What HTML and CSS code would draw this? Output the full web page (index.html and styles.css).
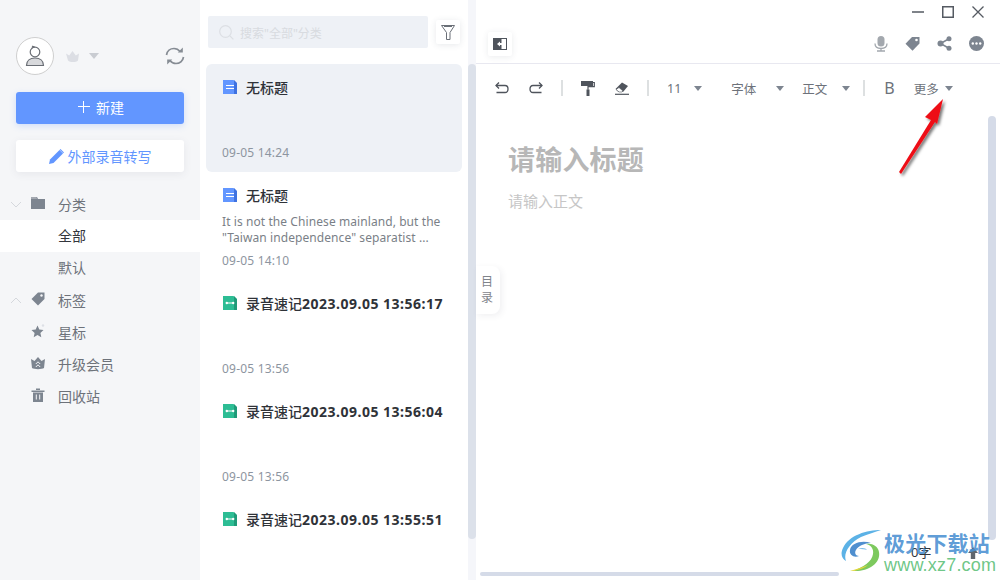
FILE: index.html
```html
<!DOCTYPE html>
<html lang="zh-CN">
<head>
  <meta charset="UTF-8">
  <title>录音笔记</title>
  <link rel="stylesheet" href="styles.css">
</head>
<body>
<div class="app">

  <!-- left sidebar -->
  <aside class="sidebar">
    <div class="user-row">
      <div class="avatar">
        <svg width="24" height="24" viewBox="0 0 24 24"><path d="M3.500 21.500c0-5 3.600-7.500 8.500-7.500s8.500 2.500 8.500 7.500z" fill="#d8d9dc" stroke="#6a6e75" stroke-width="1.200"/><circle cx="12" cy="8" r="4.800" fill="#fff" stroke="#6a6e75" stroke-width="1.200"/><path d="M9.200 4.200l.3-2.200 2.500 1.200" fill="none" stroke="#6a6e75"/></svg>
      </div>
      <svg class="crown" width="13" height="11" viewBox="0 0 13 11"><path d="M0 2.500l3.200 2L6.500 0l3.300 4.500 3.200-2-1 7c-2 2-8 2-10 0z" fill="#dcdee4"/></svg>
      <span class="caret caret-light"></span>
      <svg class="sync" width="20" height="20" viewBox="0 0 20 20" fill="none" stroke="#868c94" stroke-width="1.700"><path d="M1.500 9c.6-4 3.800-6.500 7.500-6.500 2.500 0 4.500 1 6 3"/><path d="M18.500 11c-.6 4-3.800 6.500-7.500 6.500-2.500 0-4.500-1-6-3"/><path d="M17.800 1.500v5h-5z" fill="#868c94" stroke="none"/><path d="M2.200 18.500v-5h5z" fill="#868c94" stroke="none"/></svg>
    </div>
    <button class="btn-new"><span class="plus"></span>新建</button>
    <button class="btn-transcribe">
      <svg width="15" height="15" viewBox="0 0 15 15"><path d="M0 15l1-4.500L10.500 1l3.500 3.500L4.500 14z" fill="#6296ff"/><path d="M11.500 0l3.500 3.500-.8.800-3.500-3.500z" fill="#6296ff"/></svg>
      外部录音转写
    </button>
    <ul class="nav">
      <li class="nav-row">
        <svg class="chev" width="12" height="7" viewBox="0 0 12 7"><path d="M1 1l5 5 5-5" fill="none" stroke="#d5d8dd"/></svg>
        <svg class="nav-icon" width="14" height="14" viewBox="0 0 14 14"><path d="M0 1h6l1 2h7v10H0z" fill="#7d8590"/><path d="M0 1h5.500L6 3H0z" fill="#a3a8b0"/></svg>
        分类
      </li>
      <li class="nav-row nav-sub is-active">全部</li>
      <li class="nav-row nav-sub">默认</li>
      <li class="nav-row">
        <svg class="chev" width="12" height="7" viewBox="0 0 12 7"><path d="M1 6l5-5 5 5" fill="none" stroke="#d5d8dd"/></svg>
        <svg class="nav-icon" width="14" height="14" viewBox="0 0 14 14"><path d="M7 0.500h6.500V7L7 13.500 0.500 7z" fill="#7d8590"/><circle cx="10.500" cy="3.500" r="1.200" fill="#f5f6f8"/></svg>
        标签
      </li>
      <li class="nav-row">
        <svg class="nav-icon" width="14" height="14" viewBox="0 0 14 14"><path d="M6.500 1.500l1.800 4 4.200.5-3.100 2.900.9 4.300-3.800-2.200-3.800 2.200.9-4.300L.5 6l4.200-.5z" fill="#7d8590"/><circle cx="12" cy="1.500" r="1.200" fill="#dde0e6"/></svg>
        星标
      </li>
      <li class="nav-row">
        <svg class="nav-icon" width="14" height="14" viewBox="0 0 14 14"><path d="M0 3l3.500 2L7 1l3.500 4L14 3l-1 9c-2 1.500-10 1.500-12 0z" fill="#7d8590"/><path d="M4.800 8L7 5.800 9.200 8M4.800 11L7 8.800 9.200 11" fill="none" stroke="#f5f6f8"/></svg>
        升级会员
      </li>
      <li class="nav-row">
        <svg class="nav-icon" width="14" height="14" viewBox="0 0 14 14"><path d="M0.500 2.500h13v1.500h-13zM5 0.500h4v1.500H5z" fill="#7d8590"/><path d="M2 4.500h10V14H2z" fill="#7d8590"/><path d="M5.300 6.500v5M8.700 6.500v5" stroke="#f5f6f8"/></svg>
        回收站
      </li>
    </ul>
  </aside>

  <!-- note list -->
  <section class="list">
    <div class="search-row">
      <div class="search">
        <svg width="15" height="15" viewBox="0 0 15 15" fill="none" stroke="#dcdfe4" stroke-width="1.200"><circle cx="6.500" cy="6.500" r="5.800"/><path d="M11 11l3.400 3.400"/></svg>
        <span>搜索"全部"分类</span>
      </div>
      <button class="filter">
        <svg width="14" height="15" viewBox="0 0 14 15" fill="none" stroke="#6a6f77"><path d="M0.500 0.500h13L9 7.500v7H5.500v-7z"/><path d="M3 1.500h8"/></svg>
      </button>
    </div>

    <article class="note is-selected">
      <h3><svg class="doc" width="14" height="14" viewBox="0 0 14 14"><path d="M0 0h10.500L14 3.500V14H0z" fill="#6296ff"/><path d="M11 0l3 3v11h-3z" fill="#3f72e0"/><path d="M3 5.500h8M3 8.500h8" stroke="#fff" stroke-width="1.200"/></svg>无标题</h3>
      <p class="excerpt"></p>
      <time>09-05 14:24</time>
    </article>
    <article class="note">
      <h3><svg class="doc" width="14" height="14" viewBox="0 0 14 14"><path d="M0 0h10.500L14 3.500V14H0z" fill="#6296ff"/><path d="M11 0l3 3v11h-3z" fill="#3f72e0"/><path d="M3 5.500h8M3 8.500h8" stroke="#fff" stroke-width="1.200"/></svg>无标题</h3>
      <p class="excerpt">It is not the Chinese mainland, but the "Taiwan independence" separatist ...</p>
      <time>09-05 14:10</time>
    </article>
    <article class="note">
      <h3><svg class="doc" width="14" height="14" viewBox="0 0 14 14"><path d="M0 0h10.500L14 3.500V14H0z" fill="#2dbd94"/><path d="M11 0l3 3v11h-3z" fill="#1f9a78"/><path d="M3.500 7h7" stroke="#fff"/><circle cx="3.800" cy="7" r="1.200" fill="#fff"/><circle cx="10.200" cy="7" r="1.200" fill="#fff"/></svg><span>录音速记<b>2023.09.05 13:56:17</b></span></h3>
      <p class="excerpt"></p>
      <time>09-05 13:56</time>
    </article>
    <article class="note">
      <h3><svg class="doc" width="14" height="14" viewBox="0 0 14 14"><path d="M0 0h10.500L14 3.500V14H0z" fill="#2dbd94"/><path d="M11 0l3 3v11h-3z" fill="#1f9a78"/><path d="M3.500 7h7" stroke="#fff"/><circle cx="3.800" cy="7" r="1.200" fill="#fff"/><circle cx="10.200" cy="7" r="1.200" fill="#fff"/></svg><span>录音速记<b>2023.09.05 13:56:04</b></span></h3>
      <p class="excerpt"></p>
      <time>09-05 13:56</time>
    </article>
    <article class="note">
      <h3><svg class="doc" width="14" height="14" viewBox="0 0 14 14"><path d="M0 0h10.500L14 3.500V14H0z" fill="#2dbd94"/><path d="M11 0l3 3v11h-3z" fill="#1f9a78"/><path d="M3.500 7h7" stroke="#fff"/><circle cx="3.800" cy="7" r="1.200" fill="#fff"/><circle cx="10.200" cy="7" r="1.200" fill="#fff"/></svg><span>录音速记<b>2023.09.05 13:55:51</b></span></h3>
    </article>
  </section>

  <div class="list-scroll"><div class="list-thumb"></div></div>

  <!-- editor -->
  <main class="editor">
    <div class="win-bar">
      <svg width="12" height="12" viewBox="0 0 12 12"><path d="M0 6h12" stroke="#555a62" stroke-width="1.500"/></svg>
      <svg width="12" height="12" viewBox="0 0 12 12"><rect x="0.750" y="0.750" width="10.500" height="10.500" fill="none" stroke="#555a62" stroke-width="1.500"/></svg>
      <svg width="12" height="12" viewBox="0 0 12 12"><path d="M0.500 0.500l11 11M11.500 0.500l-11 11" stroke="#555a62" stroke-width="1.300"/></svg>
    </div>
    <div class="top-row">
      <button class="panel-toggle">
        <svg width="14" height="12" viewBox="0 0 14 12"><path d="M0 0h14v12H0z" fill="#4f545c"/><path d="M8.500 1h4.500v10H8.500z" fill="#fff"/><path d="M4 6l3-2.500v5z" fill="#fff"/><path d="M6 5h3v2H6z" fill="#fff"/></svg>
      </button>
      <div class="top-actions">
        <svg width="14" height="16" viewBox="0 0 14 16"><rect x="3.500" y="0" width="7" height="10.500" rx="3.500" fill="#a3a8ae"/><path d="M1 7.500c0 3.500 2.500 5 6 5s6-1.500 6-5M3 15h8M7 12.500V15" fill="none" stroke="#a3a8ae" stroke-width="1.300"/></svg>
        <svg width="15" height="15" viewBox="0 0 15 15"><path d="M7 1h7.500v6.500L7.500 14.800.5 7.800z" fill="#7d8590"/><circle cx="11.500" cy="4" r="1.300" fill="#fff"/></svg>
        <svg width="15" height="15" viewBox="0 0 15 15"><path d="M11.500 3L3.500 7.500l8 4.500" fill="none" stroke="#7d8590" stroke-width="1.500"/><circle cx="3.500" cy="7.500" r="3" fill="#7d8590"/><circle cx="12" cy="2.800" r="2.500" fill="#7d8590"/><circle cx="12" cy="12.200" r="2.500" fill="#7d8590"/></svg>
        <svg width="15" height="15" viewBox="0 0 15 15"><circle cx="7.500" cy="7.500" r="7.500" fill="#7d8590"/><circle cx="3.800" cy="7.500" r="1.200" fill="#fff"/><circle cx="7.500" cy="7.500" r="1.200" fill="#fff"/><circle cx="11.200" cy="7.500" r="1.200" fill="#fff"/></svg>
      </div>
    </div>

    <div class="toolbar">
      <button class="tool"><svg width="14" height="12" viewBox="0 0 14 12" fill="none" stroke="#4f545c" stroke-width="1.300"><path d="M1 3.500h9c2 0 3 1.500 3 3.500s-1 3.500-3 3.500H1.500"/><path d="M4 0.500l-3 3 3 3"/></svg></button>
      <button class="tool"><svg width="14" height="12" viewBox="0 0 14 12" fill="none" stroke="#4f545c" stroke-width="1.300"><path d="M13 3.500H4c-2 0-3 1.500-3 3.500s1 3.500 3 3.500h8.500"/><path d="M10 0.500l3 3-3 3"/></svg></button>
      <span class="sep"></span>
      <button class="tool"><svg width="14" height="15" viewBox="0 0 14 15"><path d="M0 0h12v5H0z" fill="#4f545c"/><path d="M12 1.500h1.300v4.200H7v3" fill="none" stroke="#4f545c" stroke-width="1.200"/><path d="M5.500 8.500h3V15h-3z" fill="#4f545c"/></svg></button>
      <button class="tool"><svg width="14" height="14" viewBox="0 0 14 14"><path d="M0.500 8L7 1.500l6 3.500-5 6H3.500z" fill="#4f545c"/><path d="M1 8.500l3 2.500h3l1-1-4-3.500z" fill="#fff" stroke="#4f545c" stroke-width=".6"/><path d="M0 13.300h14" stroke="#4f545c" stroke-width="1.200"/></svg></button>
      <span class="sep"></span>
      <span class="drop drop-size">11<i class="caret"></i></span>
      <span class="drop drop-font">字体<i class="caret"></i></span>
      <span class="drop drop-style">正文<i class="caret"></i></span>
      <span class="sep sep-tight"></span>
      <span class="bold">B</span>
      <span class="drop drop-more">更多<i class="caret"></i></span>
    </div>

    <div class="doc-body">
      <h1 class="doc-title">请输入标题</h1>
      <p class="doc-text">请输入正文</p>
    </div>

    <div class="toc">目<br>录</div>
    <div class="doc-scroll"></div>
    <div class="hscroll"></div>

    <span class="word-count">0字</span>
    <svg class="to-top" width="10" height="12" viewBox="0 0 10 12"><path d="M5 0l5 6H7.200v6H2.800V6H0z" fill="#5f656d"/></svg>
  </main>

  <!-- red pointer arrow -->
  <svg class="pointer" width="60" height="90" viewBox="0 0 60 90">
    <defs>
      <filter id="arrow-shadow" x="-30%" y="-30%" width="160%" height="160%"><feDropShadow dx="2" dy="2" stdDeviation="1.500" flood-color="#000" flood-opacity=".55"/></filter>
    </defs>
    <path d="M48 7L30 25l6 3L4 80l2 2 34-52 2 2z" fill="#ee0f16" filter="url(#arrow-shadow)"/>
  </svg>

  <!-- site mark in the corner -->
  <div class="mark">
    <svg width="44" height="42" viewBox="0 0 44 42">
      <path d="M40 0C26 0 8 5 2 18c-3 6-1 11 3 13C2 24 8 13 20 7c7-3 14-5 20-7z" fill="#5cb2e6"/>
      <path d="M30 13c-9-3-20 0-21 7-1 5 4 8 9 6-3 0-5-3-3-6 2-4 9-7 15-7z" fill="#4f8fcf"/>
      <path d="M17 19c4-2 8-1 9 1-2-1-5-1-9-1z" fill="#7dc0e8"/>
      <path d="M12 41c14 1 28-7 26-19-1-6-7-9-13-8 5 1 8 5 7 10-1 8-10 13-20 17z" fill="#7dc95e"/>
      <path d="M9 41c6 0 13-2 18-6-5 2-11 4-18 6z" fill="#e4d83c"/>
    </svg>
    <div class="mark-text">
      <strong>极光下载站</strong>
      <span>www.xz7.com</span>
    </div>
  </div>

</div>
</body>
</html>
```

FILE: styles.css
```css
* {
  box-sizing: border-box;
}

html, body {
  margin: 0;
  height: 100%;
  overflow: hidden;
}

body {
  font-family: "Noto Sans", "Noto Sans CJK SC", sans-serif;
  font-size: 14px;
  color: #33363c;
  background: #fff;
}

button {
  font: inherit;
  border: none;
  padding: 0;
  cursor: pointer;
}

svg {
  display: block;
  flex: none;
}

.app {
  position: relative;
  display: flex;
  width: 1000px;
  height: 580px;
  overflow: hidden;
}

/* sidebar */
.sidebar {
  width: 200px;
  flex: none;
  padding-top: 37px;
  background: #f5f6f8;
}

.user-row {
  display: flex;
  align-items: center;
  height: 38px;
  padding: 0 15px 0 16px;
}

.avatar {
  display: flex;
  align-items: center;
  justify-content: center;
  width: 38px;
  height: 38px;
  border: 1px solid #cfcfcf;
  border-radius: 50%;
  background: #fff;
}

.crown {
  margin-left: 12px;
}

.caret {
  display: inline-block;
  width: 0;
  height: 0;
  border-style: solid;
  border-width: 5px 4px 0;
  border-color: #7d8590 transparent transparent;
}

.caret-light {
  margin-left: 10px;
  border-width: 6px 5px 0;
  border-top-color: #c9ccd2;
}

.sync {
  margin-left: auto;
}

.btn-new,
.btn-transcribe {
  display: flex;
  align-items: center;
  justify-content: center;
  width: 168px;
  height: 32px;
  margin-left: 16px;
  border-radius: 3px;
  font-size: 14px;
}

.btn-new {
  margin-top: 17px;
  padding: 0 0 2px 2px;
  color: #fff;
  background: #6296ff;
  box-shadow: 0 2px 6px rgba(98, 150, 255, .25);
}

.plus {
  width: 12px;
  height: 12px;
  margin-right: 6px;
  background:
    linear-gradient(#fff, #fff) center / 100% 1.4px no-repeat,
    linear-gradient(#fff, #fff) center / 1.4px 100% no-repeat;
}

.btn-transcribe {
  gap: 4px;
  margin-top: 16px;
  color: #6296ff;
  background: #fff;
  box-shadow: 0 2px 8px rgba(60, 70, 90, .08);
}

.nav {
  list-style: none;
  margin: 16px 0 0;
  padding: 0;
}

.nav-row {
  position: relative;
  display: flex;
  align-items: center;
  height: 32px;
  padding-left: 58px;
  color: #6d727a;
}

.nav-sub {
  padding-bottom: 2px;
}

.nav-row.is-active {
  color: #33363c;
  background: #fff;
}

.chev {
  position: absolute;
  left: 10px;
  top: 13px;
}

.nav-icon {
  position: absolute;
  left: 31px;
  top: 8px;
}

/* note list */
.list {
  width: 268px;
  flex: none;
  padding: 16px 6px 0;
}

.search-row {
  display: flex;
  align-items: center;
  height: 32px;
  margin-bottom: 16px;
  padding-left: 2px;
}

.search {
  display: flex;
  align-items: center;
  gap: 6px;
  width: 220px;
  height: 32px;
  padding-left: 11px;
  border-radius: 2px;
  font-size: 12px;
  color: #d8dbe0;
  background: #eef1f6;
}

.search span {
  padding-top: 2px;
}

.filter {
  display: flex;
  align-items: center;
  justify-content: center;
  width: 24px;
  height: 24px;
  margin-left: 8px;
  border-radius: 2px;
  background: #fff;
  box-shadow: 0 1px 6px rgba(60, 70, 90, .12);
}

.note {
  display: flex;
  flex-direction: column;
  height: 108px;
  padding: 13px 17px 0 16px;
  border-radius: 6px;
}

.note.is-selected {
  background: #eef1f6;
}

.note h3 {
  display: flex;
  align-items: center;
  gap: 9px;
  margin: 0;
  height: 20px;
  padding-left: 1px;
  font-size: 14px;
  font-weight: 500;
  white-space: nowrap;
  color: #2f3238;
}

.note h3 b {
  font-weight: 700;
  letter-spacing: .5px;
}

.excerpt {
  height: 32px;
  margin: 9px 0 7px;
  font-size: 12px;
  line-height: 16px;
  letter-spacing: .08px;
  color: #7a7f87;
}

.note time {
  font-size: 12px;
  line-height: 16px;
  letter-spacing: .2px;
  color: #8d95a0;
}

.list-scroll {
  width: 8px;
  flex: none;
  padding-top: 64px;
  background: #f5f6fa;
}

.list-thumb {
  height: 475px;
  border-radius: 4px;
  background: #dce1ea;
}

/* editor */
.editor {
  position: relative;
  flex: 1;
}

.win-bar {
  display: flex;
  justify-content: flex-end;
  gap: 18px;
  height: 32px;
  padding: 6px 16px 0 0;
}

.top-row {
  display: flex;
  align-items: center;
  justify-content: space-between;
  height: 32px;
  padding: 0 16px 8px 12px;
  border-bottom: 1px solid #e8e8f0;
}

.panel-toggle {
  display: flex;
  align-items: center;
  justify-content: center;
  width: 24px;
  height: 24px;
  border-radius: 2px;
  background: #fff;
  box-shadow: 0 1px 6px rgba(60, 70, 90, .1);
}

.top-actions {
  display: flex;
  align-items: center;
  gap: 17px;
}

.toolbar {
  display: flex;
  align-items: center;
  height: 48px;
  padding-left: 9px;
  color: #6d727a;
  font-size: 12.5px;
}

.tool {
  display: flex;
  align-items: center;
  justify-content: center;
  width: 34px;
  height: 24px;
  background: none;
}

.sep {
  width: 2px;
  height: 16px;
  margin: 0 8px;
  background: #dde0e1;
}

.drop {
  display: flex;
  align-items: center;
}

.drop-size {
  margin-left: 10px;
}

.drop-size .caret {
  margin-left: 13px;
}

.drop-font {
  margin-left: 29px;
}

.drop-font .caret {
  margin-left: 20px;
}

.drop-style {
  margin-left: 18px;
}

.drop-style .caret {
  margin-left: 15px;
}

.sep-tight {
  margin: 0 19px 0 13px;
}

.bold {
  font-size: 16px;
  line-height: 1;
}

.drop-more {
  margin-left: 19px;
}

.drop-more .caret {
  margin-left: 6px;
}

.doc-body {
  padding: 30px 32px 0;
}

.doc-title {
  margin: 0;
  font-size: 27px;
  line-height: 36px;
  font-weight: 700;
  letter-spacing: .2px;
  color: #b7b7b7;
}

.doc-text {
  margin: 13px 0 0;
  font-size: 15px;
  line-height: 20px;
  color: #c6c6c6;
}

.toc {
  position: absolute;
  left: 0;
  top: 266px;
  width: 24px;
  height: 48px;
  padding: 8px 2px 0 0;
  border-radius: 0 8px 8px 0;
  text-align: center;
  font-size: 12px;
  line-height: 16px;
  color: #7f848b;
  background: #fff;
  box-shadow: 2px 2px 6px rgba(60, 70, 90, .08);
}

.doc-scroll {
  position: absolute;
  left: 512px;
  top: 116px;
  width: 8px;
  height: 424px;
  border-radius: 4px;
  background: #d5dbe8;
}

.hscroll {
  position: absolute;
  left: 4px;
  bottom: 4px;
  width: 359px;
  height: 4px;
  border-radius: 2px;
  background: #d5dbe8;
}

.word-count {
  position: absolute;
  left: 435px;
  top: 544px;
  font-size: 13px;
  line-height: 16px;
  color: #33363c;
}

.to-top {
  position: absolute;
  left: 492px;
  top: 547px;
}

/* overlays */
.pointer {
  position: absolute;
  left: 895px;
  top: 92px;
}

.mark {
  position: absolute;
  left: 841px;
  top: 530px;
  display: flex;
}

.mark-text {
  display: flex;
  flex-direction: column;
  margin-left: -1px;
}

.mark-text strong {
  font-family: "Noto Sans CJK SC", sans-serif;
  font-size: 21px;
  line-height: 24px;
  font-weight: 700;
  letter-spacing: .2px;
  color: rgba(74, 144, 210, .9);
}

.mark-text span {
  margin-top: 2px;
  font-family: "Liberation Sans", sans-serif;
  font-size: 18px;
  line-height: 18px;
  letter-spacing: .2px;
  color: rgba(92, 192, 120, .9);
}
```
